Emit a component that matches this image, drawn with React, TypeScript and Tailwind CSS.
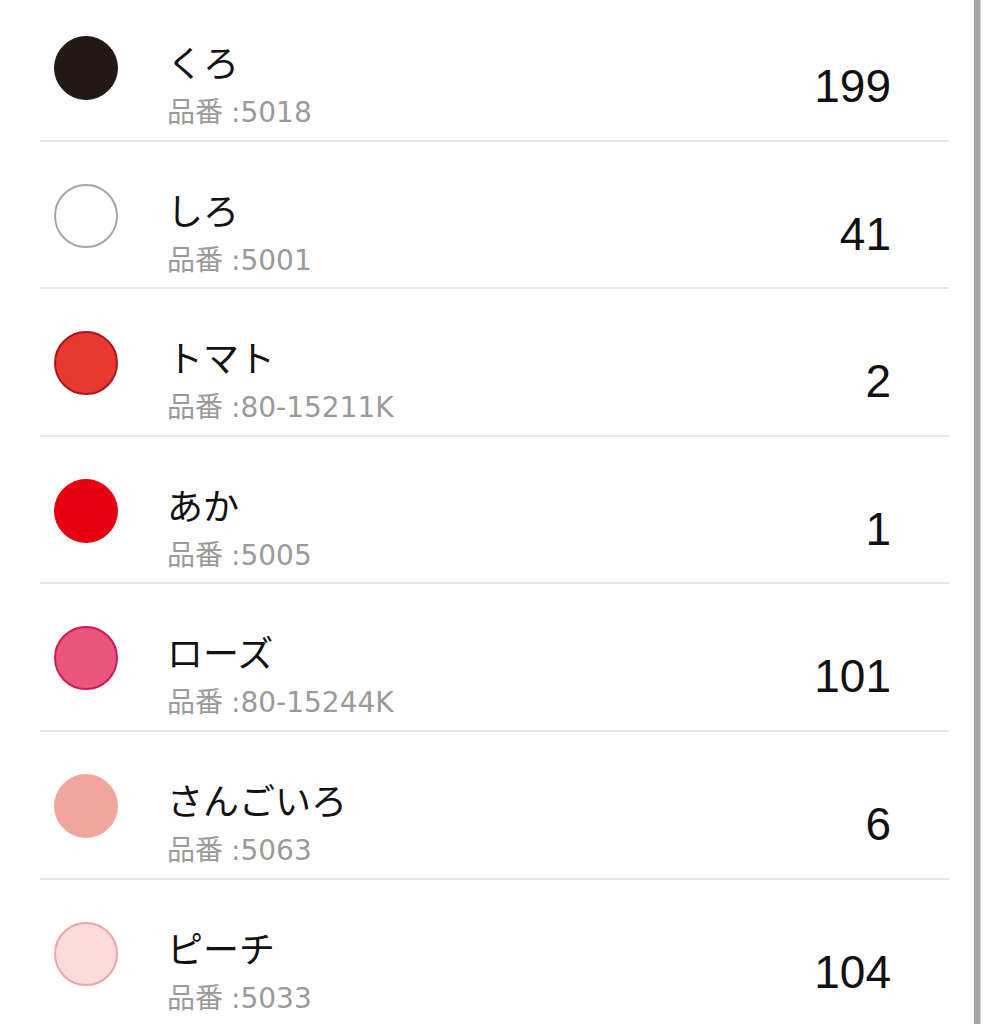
import React from "react";

type Color = {
  name: string;
  code: string;
  count: number;
  swatch: string;
};

const colors: Color[] = [
  { name: "くろ", code: "5018", count: 199, swatch: "bg-[#231815] border-[1.5px] border-[#231815]" },
  { name: "しろ", code: "5001", count: 41, swatch: "bg-white border-2 border-[#a6a6a6]" },
  { name: "トマト", code: "80-15211K", count: 2, swatch: "bg-[#e8382f] border-2 border-[#a8171b]" },
  { name: "あか", code: "5005", count: 1, swatch: "bg-[#e60012] border-[1.5px] border-[#e60012]" },
  { name: "ローズ", code: "80-15244K", count: 101, swatch: "bg-[#e9557b] border-2 border-[#cf1a5a]" },
  { name: "さんごいろ", code: "5063", count: 6, swatch: "bg-[#f2a59e] border-[1.5px] border-[#f2a59e]" },
  { name: "ピーチ", code: "5033", count: 104, swatch: "bg-[#fddbdb] border-2 border-[#eca4a7]" },
];

function ColorRow({ item }: { item: Color }) {
  return (
    <div className="flex items-start h-[147.6px] border-b-2 border-[#e6e6e6] pl-[14px] pr-[58px]">
      <div className={`mt-[42px] w-16 h-16 rounded-full shrink-0 ${item.swatch}`} />
      <div className="ml-[49px] pt-[53px] flex flex-col">
        <div className="text-[36px] leading-none text-[#111111]">{item.name}</div>
        <div className="mt-[16px] flex text-[28px] leading-none text-[#9a9a9a] font-['DejaVu_Sans','Noto_Sans_CJK_JP',sans-serif]">
          <span>品番</span>
          <span className="ml-[8px]">:</span>
          <span>{item.code}</span>
        </div>
      </div>
      <div className="ml-auto pt-[69px] text-[46px] leading-none text-[#111111]">{item.count}</div>
    </div>
  );
}

export default function App() {
  return (
    <div
      className="relative h-[1024px] w-[989px] overflow-hidden bg-white flex"
      style={{ fontFamily: '"Liberation Sans", "Noto Sans CJK JP", sans-serif' }}
    >
      <div className="ml-[40px] w-[909px] mt-[-6px]">
        {colors.map((c) => (
          <ColorRow key={c.code} item={c} />
        ))}
      </div>
      <div className="ml-[25px] w-[6px] h-full bg-[#a6a6a6]" />
      <div className="w-px h-full bg-[#d4d4d4]" />
    </div>
  );
}
